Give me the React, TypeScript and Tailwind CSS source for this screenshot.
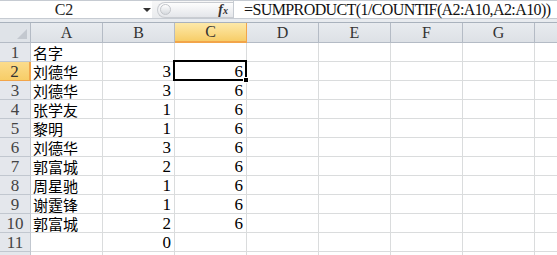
import React from "react";

const cols = ["A", "B", "C", "D", "E", "F", "G", ""];

const data: [string, string, string][] = [
  ["名字", "", ""],
  ["刘德华", "3", "6"],
  ["刘德华", "3", "6"],
  ["张学友", "1", "6"],
  ["黎明", "1", "6"],
  ["刘德华", "3", "6"],
  ["郭富城", "2", "6"],
  ["周星驰", "1", "6"],
  ["谢霆锋", "1", "6"],
  ["郭富城", "2", "6"],
  ["", "0", ""],
  ["", "", ""],
];

const serif = "font-[family-name:'Liberation_Serif','Noto_Sans_CJK_SC',serif]";
const cjk = "font-[family-name:'Noto_Sans_CJK_SC',sans-serif]";

function FormulaBar() {
  return (
    <div className="flex h-[19px] border-t border-b border-[#c6cbd2] bg-white">
      <div className="flex w-[152px] items-center">
        <div className={`w-[128px] text-center text-[16px] leading-none text-[#222] ${serif}`}>C2</div>
        <div className="ml-[15px] h-0 w-0 border-x-[4px] border-t-[4px] border-x-transparent border-t-[#333]" />
      </div>
      <div className="flex w-[82px] items-center border-r border-[#c6cbd2] bg-gradient-to-b from-[#f7f7f7] to-[#e9ebee] pl-[5px]">
        <div className="flex h-[16px] w-[76px] items-center rounded-l-full border border-r-0 border-[#c9ccd1] bg-gradient-to-b from-[#fdfdfd] to-[#e4e6ea]">
          <div className="ml-[2px] h-[11px] w-[11px] rounded-full border border-[#c2c5ca] bg-gradient-to-b from-[#ffffff] to-[#d6d9de]" />
          <span className="ml-auto mr-[5px] font-[family-name:'Liberation_Serif',serif] text-[14px] font-bold italic leading-none text-[#333]">
            f<span className="text-[10px]">x</span>
          </span>
        </div>
      </div>
      <div className={`flex flex-1 items-center pl-[10px] text-[16px] leading-none tracking-[-0.6px] text-[#111] ${serif}`}>
        =SUMPRODUCT(1/COUNTIF(A2:A10,A2:A10))
      </div>
    </div>
  );
}

function HeaderRow() {
  return (
    <div className="flex h-[21px] border-t border-[#a9b2bd]">
      <div className="relative h-[20px] w-[31px] shrink-0 border-r border-b border-[#b4bbc5] bg-[#dfe3e8]">
        <div className="absolute right-[3px] bottom-[3px] h-0 w-0 border-b-[10px] border-l-[10px] border-b-[#c3c8cf] border-l-transparent" />
      </div>
      {cols.map((c, i) => (
        <div
          key={i}
          className={`flex h-[20px] w-[72px] shrink-0 items-center justify-center border-r text-[16px] leading-none ${serif} ${
            c === "C"
              ? "border-b-2 border-[#f2a54a] bg-gradient-to-b from-[#fde9a9] to-[#f7cd67] text-[#333]"
              : "border-b border-[#b4bbc5] bg-gradient-to-b from-[#e8ebef] to-[#dde1e6] text-[#333]"
          }`}
        >
          {c}
        </div>
      ))}
    </div>
  );
}

function Row({ n, cells }: { n: number; cells: [string, string, string] }) {
  const sel = n === 2;
  return (
    <div className="flex h-[19px]">
      <div
        className={`flex h-[19px] w-[31px] shrink-0 items-center justify-center border-b text-[17px] leading-none ${serif} ${
          sel
            ? "border-r-2 border-[#f2a54a] bg-gradient-to-b from-[#fbdc8c] to-[#f7cd67] text-[#333]"
            : "border-r border-[#c1c7cf] bg-[#e4e7ec] text-[#444]"
        }`}
      >
        {n < 12 ? n : ""}
      </div>
      {cols.map((c, i) => {
        const v = i < 3 ? cells[i] : "";
        return (
          <div
            key={i}
            className={`flex h-[19px] w-[72px] shrink-0 items-center border-r border-b border-[#dadcdd] pt-[1px] leading-none text-black ${
              i === 0 ? `${cjk} pl-[2px] text-[15px]` : `${serif} justify-end pr-[3px] text-[17px]`
            }`}
          >
            {v}
          </div>
        );
      })}
    </div>
  );
}

export default function App() {
  return (
    <div className="relative h-[255px] w-[557px] overflow-hidden bg-white">
      <FormulaBar />
      <div className="h-[3px] bg-[#e8ebef]" />
      <HeaderRow />
      {data.map((cells, idx) => (
        <Row key={idx} n={idx + 1} cells={cells} />
      ))}
      <div className="pointer-events-none absolute left-[173px] top-[60px] h-[21px] w-[74px] border-2 border-black" />
      <div className="pointer-events-none absolute left-[243px] top-[77px] h-[6px] w-[6px] border border-white bg-black" />
    </div>
  );
}
